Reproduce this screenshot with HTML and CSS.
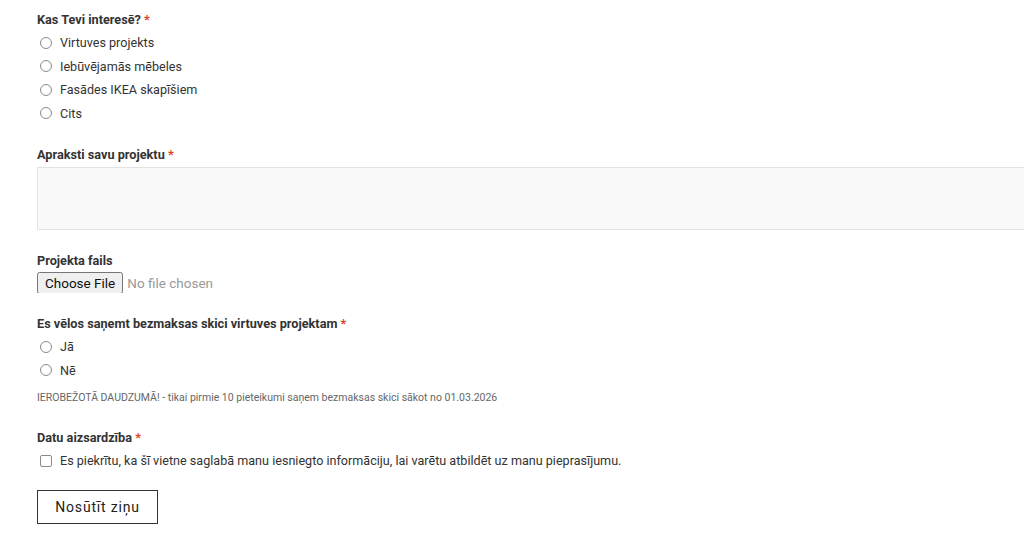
FILE: index.html
```html
<!DOCTYPE html>
<html lang="lv">
<head>
<meta charset="utf-8">
<title>Forma</title>
<link rel="stylesheet" href="styles.css">
</head>
<body>
<form class="form">
  <div class="field">
    <div class="label">Kas Tevi interesē? <span class="req">*</span></div>
    <label class="opt"><input type="radio" name="i" class="radio"><span>Virtuves projekts</span></label>
    <label class="opt"><input type="radio" name="i" class="radio"><span>Iebūvējamās mēbeles</span></label>
    <label class="opt"><input type="radio" name="i" class="radio"><span>Fasādes IKEA skapīšiem</span></label>
    <label class="opt"><input type="radio" name="i" class="radio"><span>Cits</span></label>
  </div>
  <div class="field">
    <div class="label">Apraksti savu projektu <span class="req">*</span></div>
    <textarea class="textarea"></textarea>
  </div>
  <div class="field">
    <div class="label">Projekta fails</div>
    <input type="file" class="file">
  </div>
  <div class="field">
    <div class="label">Es vēlos saņemt bezmaksas skici virtuves projektam <span class="req">*</span></div>
    <label class="opt"><input type="radio" name="s" class="radio"><span>Jā</span></label>
    <label class="opt"><input type="radio" name="s" class="radio"><span>Nē</span></label>
    <div class="note">IEROBEŽOTĀ DAUDZUMĀ! - tikai pirmie 10 pieteikumi saņem bezmaksas skici sākot no 01.03.2026</div>
  </div>
  <div class="field field-privacy">
    <div class="label">Datu aizsardzība <span class="req">*</span></div>
    <label class="opt"><input type="checkbox" class="check"><span>Es piekrītu, ka šī vietne saglabā manu iesniegto informāciju, lai varētu atbildēt uz manu pieprasījumu.</span></label>
  </div>
  <button type="button" class="submit">Nosūtīt ziņu</button>
</form>
</body>
</html>
```
FILE: styles.css
```css
html, body {
  margin: 0;
  padding: 0;
  overflow: hidden;
  background: #fff;
}
body {
  font-family: Roboto, "Liberation Sans", sans-serif;
  color: #333;
}
.form {
  padding: 10px 0 0 37px;
  width: 1020px;
  display: flex;
  flex-direction: column;
  align-items: flex-start;
}
.field {
  display: flex;
  flex-direction: column;
  align-items: flex-start;
  margin-bottom: 21px;
  width: 100%;
}
.field:first-child {
  margin-bottom: 20px;
}
.label {
  font-size: 12.7px;
  font-weight: 700;
  line-height: 20px;
  margin-bottom: 1px;
  color: #333;
}
.req {
  color: #e2401c;
}
.opt {
  display: flex;
  align-items: center;
  height: 23.5px;
  font-size: 12.6px;
  color: #333;
}
.radio, .check {
  appearance: none;
  -webkit-appearance: none;
  margin: 0 8px 0 3px;
  width: 12px;
  height: 12px;
  border: 1px solid #8a8a8a;
  background: #fff;
  box-sizing: border-box;
  flex: none;
}
.radio {
  border-radius: 50%;
}
.check {
  border-radius: 2px;
}
.textarea {
  display: block;
  width: 100%;
  height: 63px;
  box-sizing: border-box;
  border: 1px solid #e2e2e2;
  background: #f9f9f9;
  resize: none;
  margin: 1px 0 0;
}
.file {
  font-family: Roboto, "Liberation Sans", sans-serif;
  font-size: 13.5px;
  color: #999;
  height: 21px;
}
.file::file-selector-button {
  font-family: Roboto, "Liberation Sans", sans-serif;
  font-size: 13.5px;
  color: #111;
  margin-right: 4px;
}
.note {
  font-size: 10.5px;
  line-height: 14px;
  color: #666;
  margin-top: 9px;
  margin-bottom: 2px;
}
.field-privacy {
  margin-bottom: 17.5px;
}
.submit {
  width: 121px;
  height: 34px;
  background: #fff;
  border: 1px solid #333;
  border-radius: 0;
  font-family: Roboto, "Liberation Sans", sans-serif;
  font-size: 14px;
  letter-spacing: 0.8px;
  color: #222;
  padding: 0;
}
```
